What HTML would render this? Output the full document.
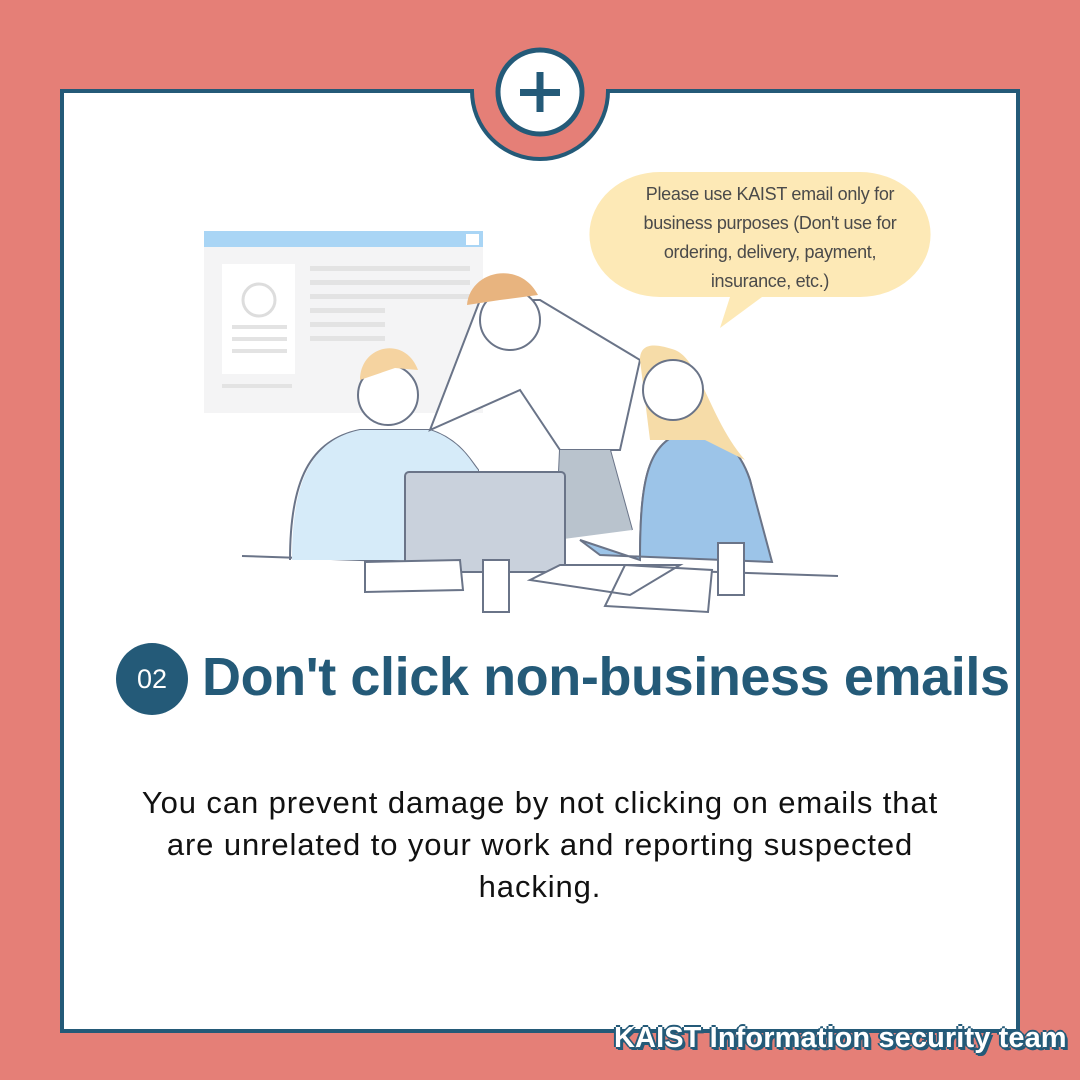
<!DOCTYPE html>
<html><head><meta charset="utf-8"><style>
body{margin:0;width:1080px;height:1080px;background:#e57f77;position:relative;overflow:hidden;font-family:"Liberation Sans",sans-serif}
.abs{position:absolute}
</style></head><body>
<svg class="abs" style="left:0;top:0" width="1080" height="1080">
<rect x="62" y="91" width="956" height="940" fill="#fff" stroke="#245a78" stroke-width="4"/>
<path d="M472 91 A68 68 0 0 0 608 91 Z" fill="#e57f77"/>
<rect x="474" y="85" width="132" height="8" fill="#e57f77"/>
<path d="M472 91 A68 68 0 0 0 608 91" fill="none" stroke="#245a78" stroke-width="4"/>
<circle cx="540" cy="92" r="42" fill="#fff" stroke="#245a78" stroke-width="5"/>
<rect x="520" y="89" width="40" height="7" fill="#245a78"/>
<rect x="536.5" y="72" width="7" height="40" fill="#245a78"/>
<rect x="204" y="231" width="279" height="182" fill="#f4f4f5"/>
<rect x="204" y="231" width="279" height="16" fill="#a9d5f5"/>
<rect x="466" y="234" width="13" height="11" fill="#fff"/>
<rect x="222" y="264" width="73" height="110" fill="#fff"/>
<circle cx="259" cy="300" r="16" fill="none" stroke="#ddd" stroke-width="3"/>
<g fill="#e3e3e3"><rect x="232" y="325" width="55" height="4"/><rect x="232" y="337" width="55" height="4"/><rect x="232" y="349" width="55" height="4"/>
<rect x="310" y="266" width="160" height="5"/><rect x="310" y="280" width="160" height="5"/><rect x="310" y="294" width="160" height="5"/><rect x="310" y="308" width="75" height="5"/><rect x="310" y="322" width="75" height="5"/><rect x="310" y="336" width="75" height="5"/><rect x="222" y="384" width="70" height="4"/></g>
<path d="M660 172 H860 A70 62 0 0 1 860 297 H762 L720 328 L730 297 H660 A70 62 0 0 1 660 172 Z" fill="#fde9b6"/>
<g fill="none" stroke="#6a7488" stroke-width="2">
<line x1="242" y1="556" x2="838" y2="576"/>
<path d="M290 560 C290 480 310 440 360 430 L430 430 C460 440 470 460 478 470 L478 560"/>
<path d="M556 540 L560 450 L610 450 L632 530"/>
<path d="M640 560 C640 470 650 440 690 430 C720 430 740 450 750 480 L770 560"/>
</g>
<path d="M292 560 C292 480 312 440 360 430 L430 430 C460 440 470 460 478 470 L478 560 Z" fill="#d6ebf9"/>
<path d="M430 430 L480 300 L540 300 L640 360 L620 450 L560 450 L520 390 Z" fill="#fff" stroke="#6a7488" stroke-width="2"/>
<path d="M556 540 L560 450 L610 450 L632 530 Z" fill="#b9c3cd"/>
<path d="M640 560 C640 470 650 440 690 430 C720 430 740 450 750 480 L772 562 L600 555 L580 540 Z" fill="#9cc4e8" stroke="#6a7488" stroke-width="2"/>
<path d="M640 360 C640 340 660 345 675 350 C700 360 710 420 745 460 L705 440 L650 440 Z" fill="#f6dca8"/>
<circle cx="673" cy="390" r="30" fill="#fff" stroke="#6a7488" stroke-width="2"/>
<circle cx="388" cy="395" r="30" fill="#fff" stroke="#6a7488" stroke-width="2"/>
<path d="M360 380 C360 345 405 335 418 370 L395 368 Z" fill="#f5d3a0"/>
<circle cx="510" cy="320" r="30" fill="#fff" stroke="#6a7488" stroke-width="2"/>
<path d="M467 305 C470 270 520 260 538 295 L500 300 Z" fill="#e8b47f"/>
<rect x="405" y="472" width="160" height="100" rx="4" fill="#c9d1dc" stroke="#6a7488" stroke-width="2"/>
<path d="M365 562 L460 560 L463 590 L365 592Z M530 580 L560 565 L680 565 L630 595Z M625 565 L712 570 L708 612 L605 606Z" fill="#fff" stroke="#6a7488" stroke-width="2"/>
<rect x="483" y="560" width="26" height="52" fill="#fff" stroke="#6a7488" stroke-width="2"/>
<rect x="718" y="543" width="26" height="52" fill="#fff" stroke="#6a7488" stroke-width="2"/>
<circle cx="152" cy="679" r="36" fill="#245a78"/>
</svg>
<div class="abs" style="left:600px;top:180px;width:340px;text-align:center;font-size:18px;line-height:29px;color:#4a4a4a;letter-spacing:-0.3px">Please use KAIST email only for<br>business purposes (Don't use for<br>ordering, delivery, payment,<br>insurance, etc.)</div>
<div class="abs" style="left:116px;top:660px;width:72px;text-align:center;color:#fff;font-size:27px;line-height:38px">02</div>
<div class="abs" style="left:202px;top:642px;font-size:54px;font-weight:bold;color:#245a78;letter-spacing:-0.4px;line-height:70px;white-space:nowrap">Don't click non-business emails</div>
<div class="abs" style="left:40px;top:782px;width:1000px;text-align:center;font-size:31px;line-height:42px;color:#111;letter-spacing:0.9px">You can prevent damage by not clicking on emails that<br>are unrelated to your work and reporting suspected<br>hacking.</div>
<div class="abs" style="left:614px;top:1022px;font-size:29px;font-weight:bold;color:#fff;letter-spacing:0.1px;white-space:nowrap;text-shadow:-2px 0 #245a78,2px 0 #245a78,0 -2px #245a78,0 2px #245a78,2px 3px #245a78,3px 3px #245a78">KAIST Information security team</div>
</body></html>
